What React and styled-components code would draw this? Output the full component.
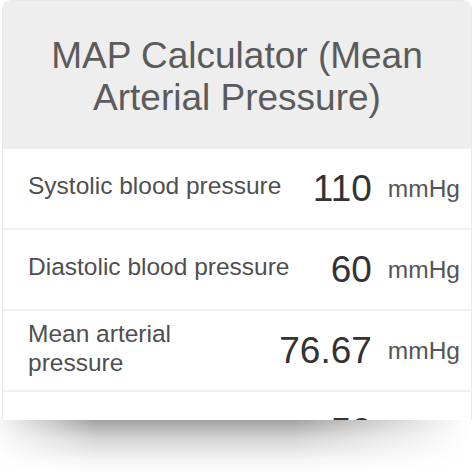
import styled, { createGlobalStyle } from "styled-components";

const GlobalStyle = createGlobalStyle`
    html, body {
        margin: 0;
        padding: 0;
        background: #ffffff;
    }

    body {
        font-family: "Liberation Sans", Arial, sans-serif;
    }
`;

const Page = styled.div`
    width: 474px;
    height: 474px;
    overflow: hidden;
    background: #ffffff;
`;

// the card is cut off at the bottom edge, with a soft shade under the cut
const Viewport = styled.div`
    height: 420px;
    overflow: hidden;
    padding: 0 2px;
`;

const Card = styled.div`
    border: 1px solid #e9e9e9;
    border-bottom: none;
    border-radius: 9px 9px 0 0;
    overflow: hidden;
    background: #ffffff;
`;

const Header = styled.div`
    height: 148px;
    box-sizing: border-box;
    padding: 4px 20px 0;
    display: flex;
    align-items: center;
    justify-content: center;
    background: #eeeeee;
`;

const Title = styled.h1`
    margin: 0;
    font-size: 37px;
    line-height: 42px;
    font-weight: 400;
    color: #5b5b5b;
    text-align: center;
`;

const Row = styled.div`
    display: flex;
    align-items: center;
    gap: 16px;
    height: 79px;
    padding: 0 11px 0 25px;
    border-top: ${({ $first }) => ($first ? "none" : "2px solid #f0f0f0")};
`;

const Label = styled.div`
    flex: 1;
    padding-bottom: 6px;
    font-size: 24.5px;
    line-height: 29px;
    color: #4f4f4f;
`;

const Value = styled.div`
    font-size: 37px;
    color: #333333;
`;

const Unit = styled.div`
    font-size: 24.5px;
    color: #555555;
`;

const Shade = styled.div`
    height: 54px;
    background: linear-gradient(180deg, rgba(0, 0, 0, 0.36) 0%, rgba(0, 0, 0, 0.16) 35%, rgba(0, 0, 0, 0.04) 75%, rgba(0, 0, 0, 0) 100%);
    -webkit-mask-image: linear-gradient(90deg, rgba(0, 0, 0, 0.1) 0%, #000 20%, #000 62%, rgba(0, 0, 0, 0) 99%);
    mask-image: linear-gradient(90deg, rgba(0, 0, 0, 0.1) 0%, #000 20%, #000 62%, rgba(0, 0, 0, 0) 99%);
`;

const rows = [
    { label: "Systolic blood pressure", value: "110" },
    { label: "Diastolic blood pressure", value: "60" },
    { label: "Mean arterial pressure", value: "76.67" },
    { label: "Pulse pressure", value: "50" },
];

export default function App() {
    return (
        <Page>
            <GlobalStyle />
            <Viewport>
                <Card>
                    <Header>
                        <Title>MAP Calculator (Mean Arterial Pressure)</Title>
                    </Header>
                    {rows.map((row, i) => (
                        <Row key={row.label} $first={i === 0}>
                            <Label>{row.label}</Label>
                            <Value>{row.value}</Value>
                            <Unit>mmHg</Unit>
                        </Row>
                    ))}
                </Card>
            </Viewport>
            <Shade />
        </Page>
    );
}
